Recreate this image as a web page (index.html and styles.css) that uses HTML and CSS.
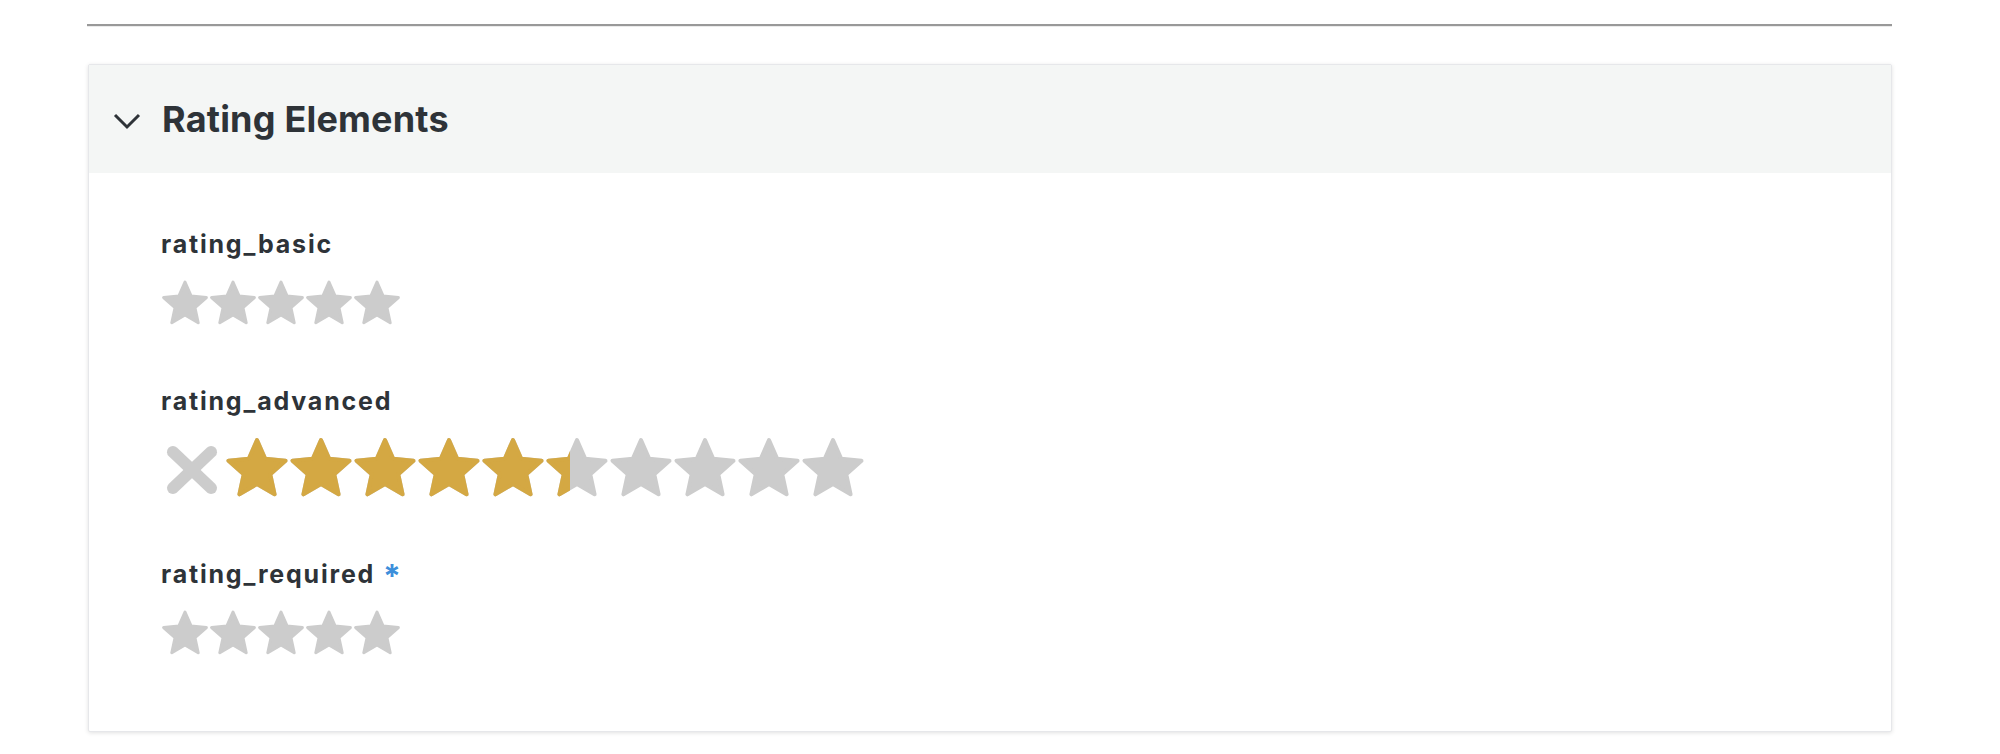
FILE: index.html
```html
<!DOCTYPE html>
<html lang="en">
<head>
  <meta charset="UTF-8">
  <meta name="viewport" content="width=device-width, initial-scale=1.0">
  <title>Rating Elements</title>
  <link rel="stylesheet" href="styles.css">
</head>
<body>
  <svg class="sprite" aria-hidden="true">
    <symbol id="star" viewBox="0 0 64 64">
      <polygon points="32,4 40.2,22.7 60.5,24.7 45.3,38.3 49.6,58.3 32,48 14.4,58.3 18.7,38.3 3.5,24.7 23.8,22.7"
        fill="currentColor" stroke="currentColor" stroke-width="4" stroke-linejoin="round"/>
    </symbol>
  </svg>

  <div class="page">
    <hr class="divider">

    <div class="panel">
      <div class="panel-head">
        <svg class="chevron" width="28" height="17" viewBox="0 0 28 17">
          <polyline points="2,2 14,14 26,2" fill="none" stroke="currentColor" stroke-width="3"/>
        </svg>
        <h2 class="panel-title">Rating Elements</h2>
      </div>

      <div class="panel-body">
        <div class="field">
          <div class="field-label">rating_basic</div>
          <div class="stars stars-small">
            <svg class="star"><use href="#star"/></svg>
            <svg class="star"><use href="#star"/></svg>
            <svg class="star"><use href="#star"/></svg>
            <svg class="star"><use href="#star"/></svg>
            <svg class="star"><use href="#star"/></svg>
          </div>
        </div>

        <div class="field">
          <div class="field-label">rating_advanced</div>
          <div class="rating-advanced">
            <button class="reset" type="button" aria-label="Reset">
              <svg width="64" height="64" viewBox="0 0 64 64">
                <line x1="12" y1="16" x2="50" y2="52" stroke="currentColor" stroke-width="12" stroke-linecap="round"/>
                <line x1="50" y1="16" x2="12" y2="52" stroke="currentColor" stroke-width="12" stroke-linecap="round"/>
              </svg>
            </button>
            <div class="track">
              <div class="stars stars-large">
                <svg class="star"><use href="#star"/></svg>
                <svg class="star"><use href="#star"/></svg>
                <svg class="star"><use href="#star"/></svg>
                <svg class="star"><use href="#star"/></svg>
                <svg class="star"><use href="#star"/></svg>
                <svg class="star"><use href="#star"/></svg>
                <svg class="star"><use href="#star"/></svg>
                <svg class="star"><use href="#star"/></svg>
                <svg class="star"><use href="#star"/></svg>
                <svg class="star"><use href="#star"/></svg>
              </div>
              <div class="fill" style="width: 345px;">
                <div class="stars stars-large">
                  <svg class="star"><use href="#star"/></svg>
                  <svg class="star"><use href="#star"/></svg>
                  <svg class="star"><use href="#star"/></svg>
                  <svg class="star"><use href="#star"/></svg>
                  <svg class="star"><use href="#star"/></svg>
                  <svg class="star"><use href="#star"/></svg>
                </div>
              </div>
            </div>
          </div>
        </div>

        <div class="field">
          <div class="field-label">rating_required <span class="required">*</span></div>
          <div class="stars stars-small">
            <svg class="star"><use href="#star"/></svg>
            <svg class="star"><use href="#star"/></svg>
            <svg class="star"><use href="#star"/></svg>
            <svg class="star"><use href="#star"/></svg>
            <svg class="star"><use href="#star"/></svg>
          </div>
        </div>
      </div>
    </div>
  </div>
</body>
</html>
```

FILE: styles.css
```css
/* General */
body {
  margin: 0;
  font-family: Inter, "Liberation Sans", sans-serif;
  color: #2e3338;
  background: #fff;
}

.sprite {
  display: none;
}

.page {
  padding: 24px 108px 40px 87px;
}

.divider {
  margin: 0;
  height: 0;
  border: 0;
  border-top: 2px solid #999;
  border-bottom: 1px solid #ebebeb;
}

/* Panel */
.panel {
  margin: 37px 0 0 1px;
  background: #fff;
  border: 1px solid #e6e7ea;
  border-radius: 2px;
  box-shadow: 0 1px 4px rgba(0, 0, 0, 0.12);
}

.panel-head {
  display: flex;
  align-items: center;
  gap: 21px;
  padding: 36px 24px;
  background: #f4f6f5;
}

.chevron {
  display: block;
  color: #2e3338;
  margin-top: 4px;
}

.panel-title {
  margin: 0;
  font-size: 36px;
  line-height: 36px;
  font-weight: 700;
  letter-spacing: 0.2px;
}

.panel-body {
  padding: 56px 72px 74px;
}

/* Fields */
.field + .field {
  margin-top: 59px;
}

.field-label {
  margin-bottom: 20px;
  font-size: 25px;
  line-height: 30px;
  font-weight: 700;
  letter-spacing: 1.8px;
}

.required {
  color: #3d8fdb;
  font-size: 32px;
  line-height: 0;
  vertical-align: -5px;
}

/* Stars */
.stars {
  display: flex;
  color: #ccc;
}

.star {
  flex-shrink: 0;
  display: block;
}

.stars-small .star {
  width: 48px;
  height: 48px;
}

.stars-large .star {
  width: 64px;
  height: 64px;
}

.rating-advanced {
  display: flex;
}

.reset {
  display: block;
  padding: 0;
  border: 0;
  background: none;
  color: #ccc;
  cursor: pointer;
}

.reset svg {
  display: block;
}

.track {
  position: relative;
}

.fill {
  position: absolute;
  top: 0;
  left: 0;
  bottom: 0;
  overflow: hidden;
}

.fill .stars {
  color: #d4a843;
}
```
